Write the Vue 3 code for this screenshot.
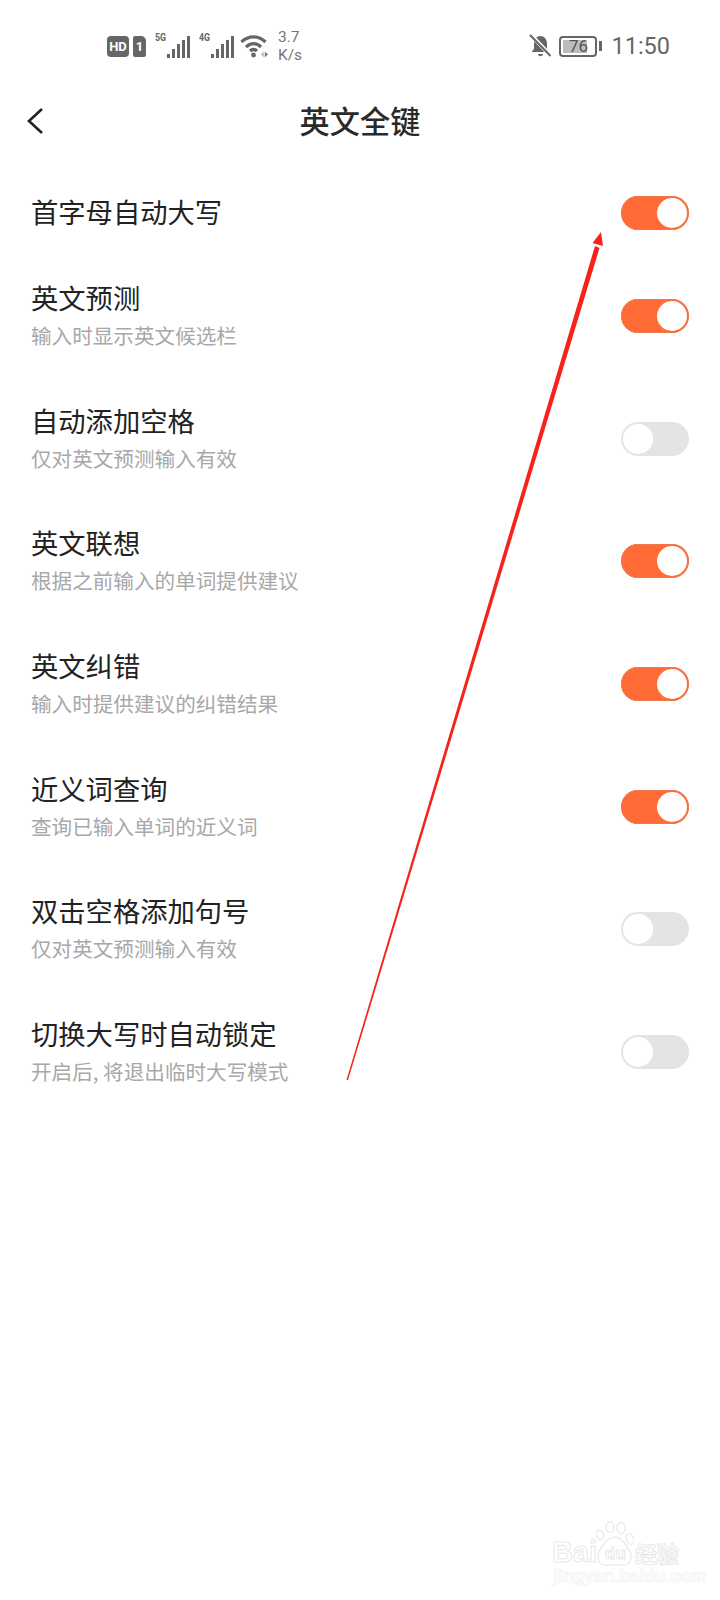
<script setup>
const rows = [
  { title: '首字母自动大写', on: true },
  { title: '英文预测', sub: '输入时显示英文候选栏', on: true },
  { title: '自动添加空格', sub: '仅对英文预测输入有效', on: false },
  { title: '英文联想', sub: '根据之前输入的单词提供建议', on: true },
  { title: '英文纠错', sub: '输入时提供建议的纠错结果', on: true },
  { title: '近义词查询', sub: '查询已输入单词的近义词', on: true },
  { title: '双击空格添加句号', sub: '仅对英文预测输入有效', on: false },
  { title: '切换大写时自动锁定', sub: '开启后, 将退出临时大写模式', on: false }
]
</script>

<template>
  <main class="page">
    <div class="status">
      <div class="status-left">
        <span class="hd">HD</span>
        <span class="sim">1</span>
        <span class="net">
          <span class="net-label">5G</span>
          <svg width="23" height="22" viewBox="0 0 23 22" fill="#666">
            <rect x="0" y="18" width="3" height="4" />
            <rect x="5" y="13" width="3" height="9" />
            <rect x="10" y="8" width="3" height="14" />
            <rect x="15" y="4" width="3" height="18" />
            <rect x="20" y="0" width="3" height="22" />
          </svg>
        </span>
        <span class="net">
          <span class="net-label">4G</span>
          <svg width="23" height="22" viewBox="0 0 23 22" fill="#666">
            <rect x="0" y="18" width="3" height="4" />
            <rect x="5" y="13" width="3" height="9" />
            <rect x="10" y="8" width="3" height="14" />
            <rect x="15" y="4" width="3" height="18" />
            <rect x="20" y="0" width="3" height="22" />
          </svg>
        </span>
        <svg class="wifi" width="28" height="24" viewBox="0 0 28 24" fill="none" stroke="#666" stroke-width="3.2">
          <path d="M1.5 8 C8.5 1.2 18.5 1.2 25.5 8" />
          <path d="M6 13 C10.5 8.5 16.5 8.5 21 13" />
          <path d="M10 17 C12.5 14.8 14.5 14.8 17 17" />
          <circle cx="13.5" cy="21" r="2.4" fill="#666" stroke="none" />
          <path d="M20.5 20.5 L24 17.5 V23.5 Z" fill="#c4c4c4" stroke="none" />
          <path d="M28 20.5 L24.8 17.5 V23.5 Z" fill="#777" stroke="none" />
        </svg>
        <span class="speed">3.7<br />K/s</span>
      </div>
      <div class="status-right">
        <svg width="23" height="24" viewBox="0 0 23 24">
          <path d="M11.5 2 C7 2 5 6 5 10 V15 L2.5 18 H20.5 L18 15 V10 C18 6 16 2 11.5 2 Z" fill="#666" />
          <path d="M9 20 H14 C14 23 9 23 9 20 Z" fill="#666" />
          <path d="M2 1 L22 22" stroke="#fff" stroke-width="4" />
          <path d="M1 1 L21.5 22" stroke="#666" stroke-width="2" />
        </svg>
        <span class="battery">
          <span class="battery-body">
            <span class="battery-fill"></span>
            <span class="battery-num">76</span>
          </span>
          <span class="battery-nub"></span>
        </span>
        <span class="time">11:50</span>
      </div>
    </div>

    <header class="nav">
      <svg class="back" width="18" height="28" viewBox="0 0 18 28" fill="none" stroke="#222" stroke-width="2.6">
        <path d="M16 2 L3 14 L16 26" />
      </svg>
      <h1 class="nav-title">英文全键</h1>
    </header>

    <ul class="list">
      <li v-for="r in rows" :key="r.title" class="row" :class="{ single: !r.sub }">
        <div class="texts">
          <div class="title">{{ r.title }}</div>
          <div v-if="r.sub" class="sub">{{ r.sub }}</div>
        </div>
        <div class="toggle" :class="{ on: r.on }"><span class="knob"></span></div>
      </li>
    </ul>

    <svg class="arrow" width="720" height="1600" viewBox="0 0 720 1600">
      <path d="M346.5 1080 L595 246 L599.5 248 L348 1080 Z" fill="#f5231a" />
      <path d="M601 232 L603 246 L592.5 243 Z" fill="#f5231a" />
    </svg>

    <div class="mark">
      <span class="mark-bai">Bai</span>
      <svg class="mark-paw" width="38" height="46" viewBox="0 0 38 46" fill="none" stroke="#ececec" stroke-width="1.5">
        <ellipse cx="4" cy="14" rx="3.5" ry="5" transform="rotate(-20 4 14)" />
        <ellipse cx="14" cy="6" rx="4" ry="5.5" />
        <ellipse cx="25" cy="7" rx="4" ry="5.5" />
        <ellipse cx="34" cy="18" rx="3.5" ry="5.5" transform="rotate(-20 34 18)" />
        <path d="M19 16 C26 16 35 30 35 36 C35 46 26 44 19 44 C10 44 2 46 2 36 C2 28 12 16 19 16 Z" />
      </svg>
      <span class="mark-du">du</span>
      <span class="mark-cn">经验</span>
      <span class="mark-url">jingyan.baidu.com</span>
    </div>
  </main>
</template>

<style scoped>
.page {
  position: relative;
  width: 720px;
  height: 1600px;
  overflow: hidden;
  background: #fff;
  font-family: "Noto Sans CJK SC", "Noto Sans", sans-serif;
  color: #222;
}

.status {
  height: 92px;
  box-sizing: border-box;
  padding: 30px 50px 0 107px;
  display: flex;
  justify-content: space-between;
  align-items: flex-start;
  color: #666;
}
.status-left,
.status-right {
  display: flex;
  align-items: center;
  height: 32px;
}
.hd {
  width: 22px;
  height: 21px;
  background: #666;
  color: #fff;
  border-radius: 4px;
  font: 700 13px/21px "Roboto", sans-serif;
  text-align: center;
}
.sim {
  width: 13px;
  height: 21px;
  margin-left: 4px;
  background: #666;
  color: #fff;
  border-radius: 2px 5px 2px 2px;
  font: 700 13px/21px "Roboto", sans-serif;
  text-align: center;
}
.net {
  display: flex;
  align-items: flex-end;
  height: 24px;
  margin-left: 9px;
  width: 35px;
  position: relative;
  justify-content: flex-end;
}
.net + .net {
  margin-left: 9px;
}
.net-label {
  position: absolute;
  left: 0;
  top: -2px;
  font: 700 11px/12px "Roboto", sans-serif;
  transform: scaleX(0.8);
  transform-origin: left center;
}
.wifi {
  margin-left: 6px;
}
.speed {
  margin-left: 10px;
  font: 15.5px/18px "Roboto", sans-serif;
  color: #777;
}
.battery {
  display: flex;
  align-items: center;
  margin-left: 7px;
}
.battery-body {
  position: relative;
  width: 38px;
  height: 21px;
  box-sizing: border-box;
  border: 2px solid #666;
  border-radius: 4px;
  overflow: hidden;
}
.battery-fill {
  position: absolute;
  left: 2px;
  top: 2px;
  bottom: 2px;
  width: 24px;
  background: #bdbdbd;
}
.battery-num {
  position: absolute;
  inset: 0;
  font: 17px/17px "Roboto", sans-serif;
  text-align: center;
  color: #555;
}
.battery-nub {
  width: 3px;
  height: 10px;
  margin-left: 2px;
  background: #666;
}
.time {
  margin-left: 9px;
  font: 23.5px/34px "Roboto", sans-serif;
  color: #666;
}

.nav {
  height: 58px;
  position: relative;
  display: flex;
  align-items: center;
  justify-content: center;
}
.back {
  position: absolute;
  left: 26px;
  top: 15px;
}
.nav-title {
  margin: -3px 0 0;
  font-size: 30.2px;
  font-weight: 500;
  line-height: 58px;
  color: #2a2a2a;
}

.list {
  list-style: none;
  margin: 20px 0 0;
  padding: 0 31px;
}
.row {
  height: 122.6px;
  display: flex;
  align-items: center;
  justify-content: space-between;
}
.row.single {
  height: 85px;
}
.title {
  margin-top: -4px;
  font-size: 27.3px;
  line-height: 36px;
  color: #222;
}
.sub {
  margin-top: 6px;
  font-size: 20.6px;
  line-height: 28px;
  color: #a8a8a8;
}
.toggle {
  width: 68px;
  height: 34px;
  box-sizing: border-box;
  border-radius: 17px;
  background: #e4e4e4;
  padding: 2px;
  display: flex;
}
.toggle.on {
  background: #ff6a35;
  box-shadow: inset 0 0 0 1px #ec7a4c;
  justify-content: flex-end;
}
.knob {
  width: 30px;
  height: 30px;
  border-radius: 50%;
  background: #fff;
}

.arrow {
  position: absolute;
  left: 0;
  top: 0;
  pointer-events: none;
}

.mark {
  position: absolute;
  left: 0;
  top: 0;
  width: 720px;
  height: 1600px;
  pointer-events: none;
  color: #fff;
  -webkit-text-stroke: 1px #e9e9e9;
}
.mark-bai {
  position: absolute;
  left: 552px;
  top: 1536px;
  font: 700 29px/32px "Liberation Sans", sans-serif;
}
.mark-paw {
  position: absolute;
  left: 596px;
  top: 1521px;
}
.mark-du {
  position: absolute;
  left: 605px;
  top: 1544px;
  font: 700 17px/20px "Liberation Sans", sans-serif;
}
.mark-cn {
  position: absolute;
  left: 635px;
  top: 1537px;
  font-size: 22px;
  line-height: 30px;
  font-weight: 700;
}
.mark-url {
  position: absolute;
  left: 553px;
  top: 1566px;
  font: 700 17.5px/20px "Liberation Sans", sans-serif;
  -webkit-text-stroke: 0.7px #efefef;
}
</style>
